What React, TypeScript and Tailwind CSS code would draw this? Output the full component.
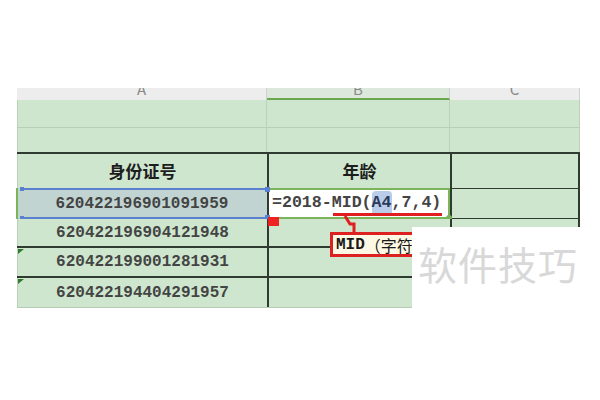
import type { ReactNode } from 'react'

const mono = { fontFamily: '"Liberation Mono", "DejaVu Sans Mono", monospace' }
const cjk = { fontFamily: '"Noto Sans CJK SC", "Noto Sans", sans-serif' }

const ids = ['620422196904121948', '620422199001281931', '620422194404291957']

function Row({ h, children, className = '' }: { h: string; children: ReactNode; className?: string }) {
  return <div className={`flex ${h} ${className}`}>{children}</div>
}

export default function App() {
  return (
    <div className="relative h-[400px] w-[600px] overflow-hidden bg-white">
      <div className="pl-[17px] pt-[88px]">
        <div className="w-[563px]">
          {/* column letters, top cut off */}
          <Row h="h-[12px]" className="overflow-hidden bg-[#ededed] text-[15px] leading-none text-[#8a8a8a]">
            <div className="flex w-[250px] justify-center border-r border-[#d0d0d0]" style={cjk}>
              <span className="-mt-[7px]">A</span>
            </div>
            <div className="flex w-[183px] justify-center border-b-2 border-r border-b-[#6aa84f] border-r-[#d0d0d0] bg-[#dde8dd]" style={cjk}>
              <span className="-mt-[7px]">B</span>
            </div>
            <div className="flex w-[130px] justify-center border-r border-[#d0d0d0]" style={cjk}>
              <span className="-mt-[7px]">C</span>
            </div>
          </Row>

          {/* empty rows */}
          <Row h="h-[28px]" className="border-b border-[#b7cfb7] bg-[#cde6cd]">
            <div className="w-[250px] border-r border-l border-[#bcd0bc]" />
            <div className="w-[183px] border-r border-[#bcd0bc]" />
            <div className="w-[130px] border-r border-[#bcd0bc]" />
          </Row>
          <Row h="h-[24px]" className="bg-[#cde6cd]">
            <div className="w-[250px] border-r border-l border-[#bcd0bc]" />
            <div className="w-[183px] border-r border-[#bcd0bc]" />
            <div className="w-[130px] border-r border-[#bcd0bc]" />
          </Row>

          {/* table header */}
          <Row h="h-[36px]" className="border-t-2 border-[#2e3b2e] bg-[#cde6cd] text-[17px] font-bold text-[#1d1d1d]">
            <div className="flex w-[250px] items-center justify-center border-l border-[#bcd0bc]" style={cjk}>身份证号</div>
            <div className="flex w-[183px] items-center justify-center border-l-2 border-[#2e3b2e]" style={cjk}>年龄</div>
            <div className="w-[130px] border-x-2 border-[#2e3b2e]" />
          </Row>

          {/* selected row */}
          <Row h="h-[31px]" className="relative bg-[#cde6cd]">
            <div className="relative flex w-[250px] items-center justify-center bg-[#c1d4d2] text-[16px] font-bold text-[#444]" style={mono}>
              <div className="absolute left-[4px] right-0 top-0 h-[2px] bg-[#5b80d0]" />
              <div className="absolute bottom-0 left-[4px] right-0 h-[2px] bg-[#5b80d0]" />
              <div className="absolute -left-px top-0 h-full w-[2px] bg-[#7bb45a]" />
              <div className="absolute left-[3px] top-[-1px] size-[4px] bg-[#5b80d0]" />
              <div className="absolute bottom-[-1px] left-[3px] size-[4px] bg-[#5b80d0]" />
              620422196901091959
            </div>
            <div className="relative flex w-[183px] items-center border-y-2 border-r-2 border-l-2 border-y-[#7bb45a] border-r-[#7bb45a] border-l-[#2e3b2e] bg-white pl-[3px] text-[16.6px] font-bold text-[#444]" style={mono}>
              <span>=2018-MID(</span>
              <span className="rounded-[4px] bg-[#b9cdea] text-[#2c3a5a]">A4</span>
              <span>,7,4)</span>
              <div className="absolute left-[-4px] top-[-3px] size-[5px] bg-[#5b80d0]" />
              <div className="absolute bottom-[-3px] left-[-4px] size-[5px] bg-[#5b80d0]" />
              <div className="absolute bottom-[-4px] right-[-4px] size-[6px] rounded-full bg-[#7bb45a]" />
            </div>
            <div className="w-[130px] border-y border-x-2 border-[#2e3b2e]" />
          </Row>

          {ids.map((id, i) => (
            <Row key={id} h={i === 0 ? 'h-[29px]' : 'h-[30px]'} className={`relative bg-[#cde6cd] ${i < 2 ? 'border-b-2 border-[#2e3b2e]' : 'border-b border-[#b7c9b7]'}`}>
              {i > 0 && <div className="absolute left-[1px] top-[1px] h-0 w-0 border-r-[6px] border-t-[5px] border-r-transparent border-t-[#2f7a2f]" />}
              <div className="flex w-[250px] items-center justify-center border-l border-[#bcd0bc] text-[16px] font-bold text-[#444]" style={mono}>
                {id}
              </div>
              <div className="w-[183px] border-l-2 border-[#2e3b2e]" />
              <div className="w-[130px] border-x-2 border-[#2e3b2e]" />
            </Row>
          ))}
        </div>
      </div>

      {/* formula hint: red underline, arrow and tooltip */}
      <div className="absolute left-[333px] top-[213px] h-[3px] w-[109px] bg-[#e02020]" />
      <div className="absolute left-[268px] top-[217px] h-[9px] w-[11px] bg-[#ee2222]" />
      <svg className="absolute left-[340px] top-[215px]" width="22" height="20" viewBox="0 0 22 20">
        <path d="M5 1 L10 9 L14 9 L14 18" fill="none" stroke="#e02020" strokeWidth="3" />
      </svg>
      <div className="absolute left-[330px] top-[232px] flex h-[25px] w-[86px] items-center overflow-hidden whitespace-nowrap border-y-[3px] border-l-[3px] border-[#dd2020] bg-[#fdf8e4] pl-[3px] text-[16px] text-[#1a1a1a]">
        <span className="font-bold" style={mono}>MID</span>
        <span style={cjk}>（字符</span>
      </div>

      {/* watermark panel */}
      <div className="absolute left-[412px] top-[227px] flex h-[173px] w-[188px] items-start bg-white pl-[6px] pt-[17px]">
        <span className="text-[39px] leading-none tracking-[1px] text-[#d8d8d8]" style={cjk}>软件技巧</span>
      </div>
    </div>
  )
}
